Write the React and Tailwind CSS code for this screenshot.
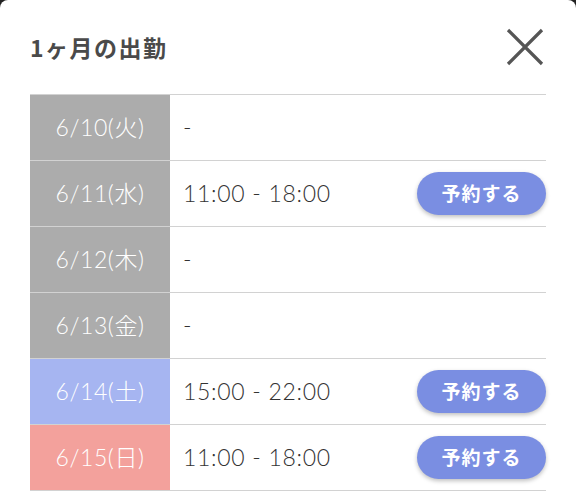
const rows = [
  { date: '6/10(火)', time: '-', bg: 'bg-[#acacac]', reserve: false },
  { date: '6/11(水)', time: '11:00 - 18:00', bg: 'bg-[#acacac]', reserve: true },
  { date: '6/12(木)', time: '-', bg: 'bg-[#acacac]', reserve: false },
  { date: '6/13(金)', time: '-', bg: 'bg-[#acacac]', reserve: false },
  { date: '6/14(土)', time: '15:00 - 22:00', bg: 'bg-[#a6b5f1]', reserve: true },
  { date: '6/15(日)', time: '11:00 - 18:00', bg: 'bg-[#f3a19c]', reserve: true },
];

export default function App() {
  return (
    <div className="w-[576px] h-[491px] bg-[#222] overflow-hidden" style={{ fontFamily: 'Lato, "Noto Sans CJK JP", sans-serif' }}>
      <div className="h-full bg-white rounded-t-[8px] px-[30px]">
        <div className="h-[94px] flex items-center justify-between">
          <h1 className="text-[23px] font-bold text-[#4a4a4a] tracking-[1.5px]" style={{ fontFamily: '"Noto Sans CJK JP", sans-serif' }}>
            1ヶ月の出勤
          </h1>
          <button className="w-[44px] h-[44px] flex items-center justify-center -mr-[1px]">
            <svg width="38" height="38" viewBox="0 0 38 38" fill="none" stroke="#555" strokeWidth="3.2">
              <path d="M2 2 L36 36 M36 2 L2 36" />
            </svg>
          </button>
        </div>
        <div className="border-t border-[#d2d2d2]">
          {rows.map((r, idx) => (
            <div key={idx} className="flex h-[66px] border-b border-[#d2d2d2]">
              <div className={`w-[140px] ${r.bg} flex items-center justify-center text-white text-[23px] font-light tracking-[0.6px]`}>
                {r.date}
              </div>
              <div className="flex-1 flex items-center justify-between pl-[13px]">
                <span className="text-[23px] font-light text-[#333] tracking-[0.7px]">{r.time}</span>
                {r.reserve && (
                  <button
                    className="w-[129px] h-[43px] rounded-full bg-[#7a8ee2] text-white text-[19px] font-bold shadow-[0_2px_4px_rgba(0,0,0,0.25)] tracking-[1px]"
                    style={{ fontFamily: '"Noto Sans CJK JP", sans-serif' }}
                  >
                    予約する
                  </button>
                )}
              </div>
            </div>
          ))}
        </div>
      </div>
    </div>
  );
}
